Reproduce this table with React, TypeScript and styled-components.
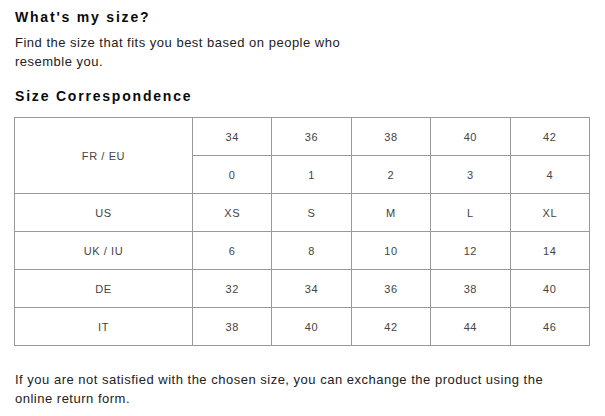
import * as React from 'react';
import styled, { createGlobalStyle } from 'styled-components';

const GlobalStyle = createGlobalStyle`
  body {
    margin: 0;
    background: #fff;
    font-family: 'Liberation Sans', Arial, sans-serif;
    color: #111;
  }
`;

const Page = styled.div`
  padding: 9px 16px 0 15px;
  width: 575px;
`;

const Title = styled.h2`
  margin: 0;
  font-size: 14px;
  line-height: 16px;
  font-weight: 700;
  letter-spacing: 1.8px;
  color: #0a0a0a;
`;

const Text = styled.p<{ narrow?: boolean }>`
  margin: 0;
  font-size: 13px;
  line-height: 19px;
  color: #222;
  letter-spacing: 0.5px;
  max-width: ${({ narrow }) => (narrow ? '380px' : '560px')};
`;

const Intro = styled.div`
  display: flex;
  flex-direction: column;
  gap: 8px;
`;

const SectionTitle = styled(Title)`
  margin: 17px 0 13px;
`;

const Table = styled.table`
  border-collapse: collapse;
  width: 576px;
  margin-left: -1px;
  table-layout: fixed;
`;

const Cell = styled.td<{ first?: boolean }>`
  border: 1px solid #999;
  height: 37px;
  padding: 0;
  text-align: center;
  vertical-align: middle;
  font-size: 11px;
  color: #444;
  letter-spacing: 0.6px;
  width: ${({ first }) => (first ? '177px' : 'auto')};
`;

const Footer = styled(Text)`
  margin-top: 24px;
`;

const rows: [string, string[]][] = [
  ['US', ['XS', 'S', 'M', 'L', 'XL']],
  ['UK / IU', ['6', '8', '10', '12', '14']],
  ['DE', ['32', '34', '36', '38', '40']],
  ['IT', ['38', '40', '42', '44', '46']],
];

export default function App() {
  return (
    <Page>
      <GlobalStyle />
      <Intro>
        <Title>What's my size?</Title>
        <Text narrow>Find the size that fits you best based on people who resemble you.</Text>
      </Intro>
      <SectionTitle>Size Correspondence</SectionTitle>
      <Table>
        <tbody>
          <tr>
            <Cell first rowSpan={2}>FR / EU</Cell>
            {['34', '36', '38', '40', '42'].map((v) => (
              <Cell key={v}>{v}</Cell>
            ))}
          </tr>
          <tr>
            {['0', '1', '2', '3', '4'].map((v) => (
              <Cell key={v}>{v}</Cell>
            ))}
          </tr>
          {rows.map(([label, values]) => (
            <tr key={label}>
              <Cell first>{label}</Cell>
              {values.map((v, i) => (
                <Cell key={i}>{v}</Cell>
              ))}
            </tr>
          ))}
        </tbody>
      </Table>
      <Footer>
        If you are not satisfied with the chosen size, you can exchange the product using the online
        return form.
      </Footer>
    </Page>
  );
}
